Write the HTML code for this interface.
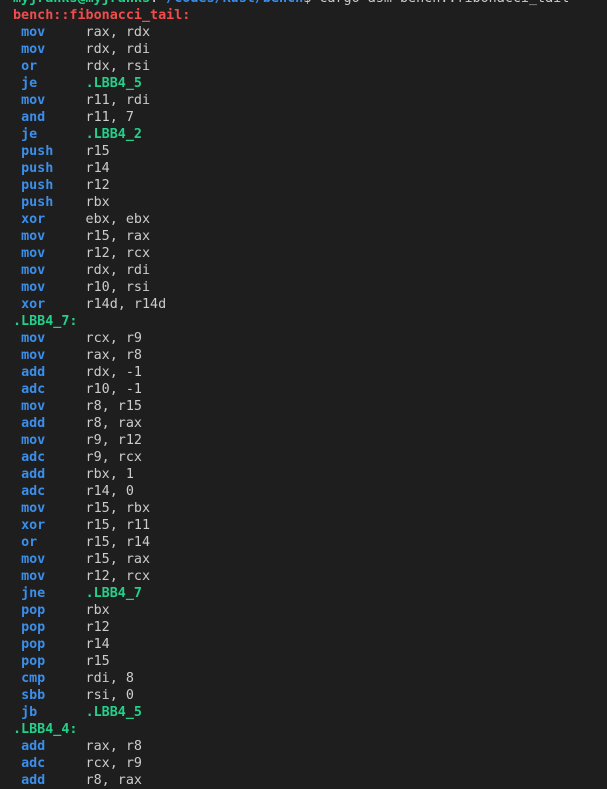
<!DOCTYPE html>
<html><head><style>
html,body{margin:0;padding:0;background:#1e1e1e;width:607px;height:780px;overflow:hidden}
pre{margin:0;position:absolute;left:13px;top:-10px;font-family:"DejaVu Sans Mono","Liberation Mono",monospace;font-size:13.4px;line-height:17px;color:#cccccc}
.m{color:#3b8eea;font-weight:bold}
.l{color:#23d18b;font-weight:bold}
.r{color:#f14c4c;font-weight:bold}
.u{color:#23d18b;font-weight:bold}
.p{color:#3b8eea;font-weight:bold}
</style></head><body><pre><span class="u">myjranks@myjranks</span>:<span class="p">~/codes/Rust/bench</span>$ cargo asm bench::fibonacci_tail
<span class="r">bench::fibonacci_tail:</span>
 <span class="m">mov</span>     rax, rdx
 <span class="m">mov</span>     rdx, rdi
 <span class="m">or</span>      rdx, rsi
 <span class="m">je</span>      <span class="l">.LBB4_5</span>
 <span class="m">mov</span>     r11, rdi
 <span class="m">and</span>     r11, 7
 <span class="m">je</span>      <span class="l">.LBB4_2</span>
 <span class="m">push</span>    r15
 <span class="m">push</span>    r14
 <span class="m">push</span>    r12
 <span class="m">push</span>    rbx
 <span class="m">xor</span>     ebx, ebx
 <span class="m">mov</span>     r15, rax
 <span class="m">mov</span>     r12, rcx
 <span class="m">mov</span>     rdx, rdi
 <span class="m">mov</span>     r10, rsi
 <span class="m">xor</span>     r14d, r14d
<span class="l">.LBB4_7:</span>
 <span class="m">mov</span>     rcx, r9
 <span class="m">mov</span>     rax, r8
 <span class="m">add</span>     rdx, -1
 <span class="m">adc</span>     r10, -1
 <span class="m">mov</span>     r8, r15
 <span class="m">add</span>     r8, rax
 <span class="m">mov</span>     r9, r12
 <span class="m">adc</span>     r9, rcx
 <span class="m">add</span>     rbx, 1
 <span class="m">adc</span>     r14, 0
 <span class="m">mov</span>     r15, rbx
 <span class="m">xor</span>     r15, r11
 <span class="m">or</span>      r15, r14
 <span class="m">mov</span>     r15, rax
 <span class="m">mov</span>     r12, rcx
 <span class="m">jne</span>     <span class="l">.LBB4_7</span>
 <span class="m">pop</span>     rbx
 <span class="m">pop</span>     r12
 <span class="m">pop</span>     r14
 <span class="m">pop</span>     r15
 <span class="m">cmp</span>     rdi, 8
 <span class="m">sbb</span>     rsi, 0
 <span class="m">jb</span>      <span class="l">.LBB4_5</span>
<span class="l">.LBB4_4:</span>
 <span class="m">add</span>     rax, r8
 <span class="m">adc</span>     rcx, r9
 <span class="m">add</span>     r8, rax
</pre></body></html>
